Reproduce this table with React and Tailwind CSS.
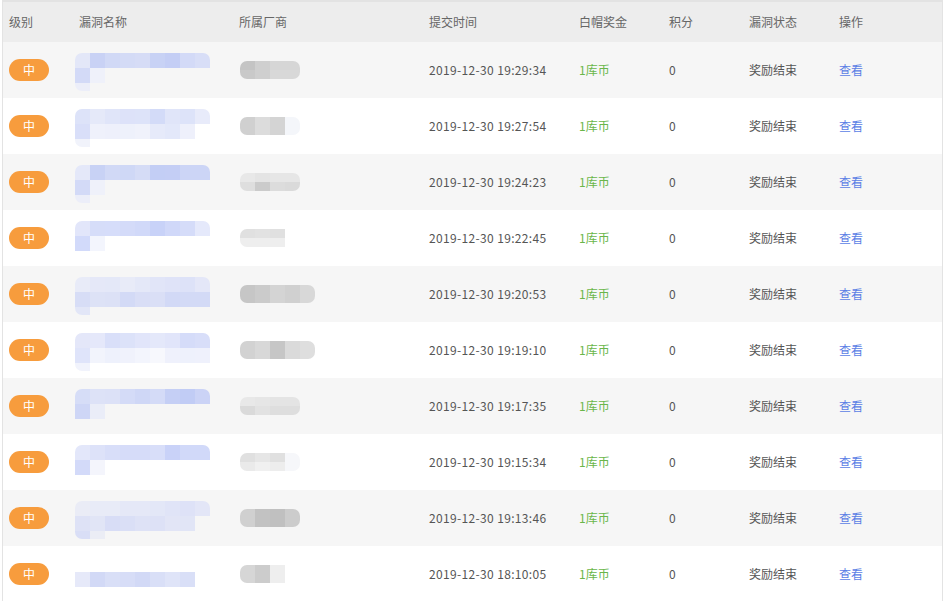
const rows = [
  { time: '2019-12-30 19:29:34' },
  { time: '2019-12-30 19:27:54' },
  { time: '2019-12-30 19:24:23' },
  { time: '2019-12-30 19:22:45' },
  { time: '2019-12-30 19:20:53' },
  { time: '2019-12-30 19:19:10' },
  { time: '2019-12-30 19:17:35' },
  { time: '2019-12-30 19:15:34' },
  { time: '2019-12-30 19:13:46' },
  { time: '2019-12-30 18:10:05' },
]

// pixelated (mosaic) cells, '' = empty
const names = [
  [['#e3e7f8', '#c9d2f5', '#d1d9f6', '#d4dbf6', '#d6dcf6', '#c8d2f5', '#c4cef5', '#d3daf7', '#d8def7'], ['#d3daf7', '#eff1fa', '', '', '', '', '', '', ''], ['#eceef9', '', '', '', '', '', '', '', '']],
  [['#dde3f9', '#e5e9f9', '#e0e5f9', '#dde2f9', '#dde3f9', '#d3dbf8', '#e0e5f9', '#dde3f9', '#e8ebfa'], ['#d9dff9', '#eff1fb', '#eef0fb', '#eef1fb', '#f0f2fb', '#e6eafa', '#e3e8fa', '#eef0fb', ''], ['#f1f3fb', '', '', '', '', '', '', '', '']],
  [['#e4e8f9', '#c8d2f5', '#d1d9f6', '#cfd8f6', '#d5dcf6', '#c3cef5', '#c4cef5', '#ccd5f6', '#ccd5f6'], ['#d3daf7', '#eff1fa', '', '', '', '', '', '', ''], ['#eceef9', '', '', '', '', '', '', '', '']],
  [['#e2e6fa', '#d6ddf9', '#d6ddfa', '#d4dbf9', '#d1d9f9', '#c8d2f8', '#d0d8f9', '#d5dcf9', '#e5e9fb'], ['#d2dafa', '#f3f5fd', '', '', '', '', '', '', ''], ['', '', '', '', '', '', '', '', '']],
  [['#e8ebf8', '#e5e8f8', '#e4e8f8', '#e8ebf8', '#e4e8f8', '#e1e5f8', '#dfe3f8', '#dde2f8', '#e4e7f8'], ['#d7ddf6', '#dde2f6', '#dce1f6', '#d3daf6', '#d9def6', '#dadff6', '#d2d9f6', '#d3daf6', '#d3daf6'], ['#e2e6f7', '', '', '', '', '', '', '', '']],
  [['#e4e7f9', '#e5e8fa', '#d9dff9', '#dce2f9', '#e1e5fa', '#e4e8fa', '#e1e5fa', '#d5dcf9', '#d8def9'], ['#dfe4fa', '#f2f4fc', '#eef1fc', '#f0f2fc', '#f3f5fd', '#f7f8fd', '#eff1fc', '#eef1fc', '#eff1fc'], ['#f1f3fc', '', '', '', '', '', '', '', '']],
  [['#d6ddf7', '#dde2f7', '#dce1f7', '#d4dbf7', '#cfd7f6', '#d4dbf7', '#c5cff5', '#c1ccf5', '#cbd3f6'], ['#ced6f6', '#eaedf8', '', '', '', '', '', '', ''], ['', '', '', '', '', '', '', '', '']],
  [['#e3e7fa', '#dde2f9', '#d8def9', '#d6dcf9', '#d6dcf9', '#d8def9', '#c9d2f8', '#d1d9f9', '#d1d9f9'], ['#d3daf9', '#f4f5fc', '', '', '', '', '', '', ''], ['', '', '', '', '', '', '', '', '']],
  [['#eaecf6', '#e8ebf7', '#e8ebf7', '#e5e8f7', '#e5e8f7', '#e3e7f7', '#e0e4f7', '#dee2f7', '#e3e6f7'], ['#dee2f6', '#e1e5f6', '#d8ddf6', '#dadff6', '#dee2f6', '#dde1f6', '#e2e5f6', '#e1e5f6', ''], ['#d9def6', '#ebedf5', '', '', '', '', '', '', '']],
  [['', '', '', '', '', '', '', '', ''], ['#e6e9f9', '#d2d9f6', '#d9dff7', '#d7ddf7', '#d2d9f6', '#d9dff7', '#dfe4f8', '#d9dff7', ''], ['', '', '', '', '', '', '', '', '']],
]

const vendors = [
  [['#c4c4c4', '#cfcfcf', '#d6d6d6', '#d6d6d6'], ['#c9c9c9', '#cfcfcf', '#d8d8d8', '#d8d8d8']],
  [['#d0d0d0', '#dcdcdc', '#d4d4d4', '#f4f6fa'], ['#d0d0d0', '#dcdcdc', '#d4d4d4', '#f4f6fa']],
  [['#e8e8e8', '#e4e4e4', '#e6e6e6', '#e6e6e6'], ['#dedede', '#cbcbcb', '#dcdcdc', '#dadada']],
  [['#e0e0e0', '#e2e2e2', '#e0e0e0', ''], ['#eeeeee', '#eeeeee', '#eeeeee', '']],
  [['#c6c6c6', '#cbcbcb', '#d4d4d4', '#d0d0d0', '#d8d8d8'], ['#c6c6c6', '#cbcbcb', '#d4d4d4', '#d0d0d0', '#d8d8d8']],
  [['#d2d2d2', '#d8d8d8', '#c6c6c6', '#dadada', '#dedede'], ['#d2d2d2', '#d8d8d8', '#c6c6c6', '#dadada', '#dedede']],
  [['#e8e8e8', '#e6e6e6', '#e4e4e4', '#e4e4e4'], ['#dadada', '#e2e2e2', '#dedede', '#dedede']],
  [['#e0e0e0', '#e6e6e6', '#e0e0e0', '#f6f7fa'], ['#eaeaea', '#f0f0f0', '#ededed', '#f6f7fa']],
  [['#d0d0d0', '#c2c2c2', '#c0c0c0', '#cccccc'], ['#d0d0d0', '#c2c2c2', '#c0c0c0', '#cccccc']],
  [['#d6d6d6', '#cccccc', '#eeeeee', ''], ['#d6d6d6', '#cccccc', '#eeeeee', '']],
]

function Mosaic({ grid, cw, heights }) {
  return (
    <div className="flex flex-col overflow-hidden rounded-[7px]">
      {grid.map((line, i) => (
        <div key={i} className="flex">
          {line.map((c, j) => (
            <div key={j} style={{ width: cw, height: heights[i], background: c || 'transparent' }} />
          ))}
        </div>
      ))}
    </div>
  )
}

const cols = ['w-[70px]', 'w-[160px]', 'w-[190px]', 'w-[150px]', 'w-[90px]', 'w-[80px]', 'w-[90px]', 'flex-1']
const heads = ['级别', '漏洞名称', '所属厂商', '提交时间', '白帽奖金', '积分', '漏洞状态', '操作']

export default function App() {
  return (
    <div className="w-[944px] h-[601px] bg-white overflow-hidden text-[12px] text-[#555]" style={{ fontFamily: '"Noto Sans CJK SC", "Microsoft YaHei", sans-serif' }}>
      <div className="ml-[2px] w-[941px] border-t-2 border-l border-r border-[#e3e3e3]">
        {/* header */}
        <div className="flex h-[40px] items-center bg-[#ededed] text-[#666]">
          {heads.map((h, i) => (
            <div key={h} className={`${cols[i]} pl-[6px]`}>{h}</div>
          ))}
        </div>

        {/* rows */}
        {rows.map((r, i) => (
          <div key={i} className={`flex h-[56px] items-center ${i % 2 === 0 ? 'bg-[#f6f6f6]' : 'bg-white'}`}>
            <div className={`${cols[0]} pl-[6px]`}>
              <span className="inline-flex h-[22px] w-[40px] items-center justify-center rounded-full bg-[#f79c3d] text-white">中</span>
            </div>
            <div className={`${cols[1]} pl-[2px]`}>
              <div className="w-[135px] mt-[4px]">
                <Mosaic grid={names[i]} cw={15} heights={[15, 15, 8]} />
              </div>
            </div>
            <div className={`${cols[2]} pl-[7px]`}>
              <div className="w-fit">
                <Mosaic grid={vendors[i]} cw={15} heights={[9, 9]} />
              </div>
            </div>
            <div className={`${cols[3]} pl-[6px] tracking-[0.35px] text-[#555]`}>{r.time}</div>
            <div className={`${cols[4]} pl-[6px] text-[#6ab64a]`}>1库币</div>
            <div className={`${cols[5]} pl-[6px]`}>0</div>
            <div className={`${cols[6]} pl-[6px]`}>奖励结束</div>
            <div className={`${cols[7]} pl-[6px] text-[#5b7ee5]`}>查看</div>
          </div>
        ))}
      </div>
    </div>
  )
}
